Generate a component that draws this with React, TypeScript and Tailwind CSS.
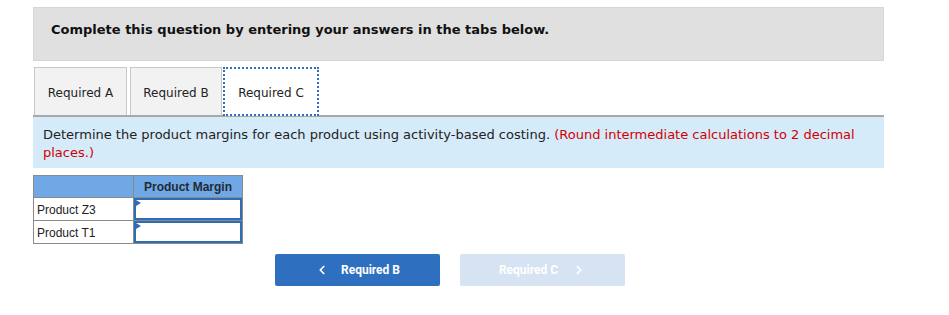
import React from 'react';
import { ChevronLeft, ChevronRight } from 'lucide-react';

const verdana = { fontFamily: '"DejaVu Sans", Verdana, sans-serif' };

function Tab({ label, className }: { label: string; className: string }) {
  return (
    <div className={`h-[48px] bg-[#f2f2f2] border border-[#c8c8c8] border-b-0 flex items-center justify-center pt-[2px] text-[12px] text-[#222] ${className}`}>
      {label}
    </div>
  );
}

function InputCell() {
  return (
    <td className="border border-[#8a8a8a] p-0 h-[23px]">
      <div className="relative h-[22px] border-2 border-[#2e6db4] bg-white">
        <span className="absolute left-0 top-0 w-0 h-0 border-t-[3px] border-b-[3px] border-l-[5px] border-t-transparent border-b-transparent border-l-[#2e6db4]" />
      </div>
    </td>
  );
}

export default function App() {
  return (
    <div className="w-[949px] h-[315px] bg-white overflow-hidden pt-[7px] pl-[33px]">
      <div className="w-[851px]">
        <div
          className="h-[54px] bg-[#e0e0e0] border border-[#d6d6d6] pl-[17px] pt-[12px] text-[13px] font-bold text-[#111]"
          style={verdana}
        >
          Complete this question by entering your answers in the tabs below.
        </div>

        <div className="mt-[6px] flex items-end border-b-2 border-[#a9a9a9]" style={verdana}>
          <Tab label="Required A" className="ml-[1px] w-[93px]" />
          <Tab label="Required B" className="ml-[3px] w-[92px]" />
          <div className="ml-[1px] w-[96px] h-[49px] -mb-px bg-white border-2 border-dotted border-[#2f6fbf] flex items-center justify-center pt-[2px] text-[12px] text-[#222]">
            Required C
          </div>
        </div>

        <div className="h-[51px] bg-[#d6ebf9] pl-[10px] pt-[9px] text-[13px] leading-[18px] text-[#222]" style={verdana}>
          Determine the product margins for each product using activity-based costing.{' '}
          <span className="text-[#d10000]">(Round intermediate calculations to 2 decimal places.)</span>
        </div>

        <table
          className="mt-[7px] border-collapse text-[12px] text-[#222]"
          style={{ fontFamily: '"Liberation Sans", Arial, sans-serif' }}
        >
          <thead>
            <tr className="bg-[#6fa8e4] h-[22px]">
              <th className="w-[100px] border border-[#8a8a8a]" />
              <th className="w-[109px] border border-[#8a8a8a] font-bold text-center text-[#1f2a37]">Product Margin</th>
            </tr>
          </thead>
          <tbody>
            <tr>
              <td className="border border-[#8a8a8a] pl-[3px] pt-[2px]">Product Z3</td>
              <InputCell />
            </tr>
            <tr>
              <td className="border border-[#8a8a8a] pl-[3px] pt-[2px]">Product T1</td>
              <InputCell />
            </tr>
          </tbody>
        </table>

        <div className="mt-[10px] ml-[242px] flex gap-[20px]" style={{ fontFamily: 'Roboto, "Open Sans", sans-serif' }}>
          <button className="w-[165px] h-[32px] rounded-[2px] bg-[#2f6fbf] text-white text-[12px] font-bold flex items-center justify-center gap-[12px]">
            <ChevronLeft className="w-[14px] h-[14px]" strokeWidth={3} />
            <span>Required B</span>
          </button>
          <button className="w-[165px] h-[32px] rounded-[2px] bg-[#d6e3f3] text-white text-[12px] font-bold flex items-center justify-center gap-[14px]">
            <span>Required C</span>
            <ChevronRight className="w-[14px] h-[14px]" strokeWidth={3} />
          </button>
        </div>
      </div>
    </div>
  );
}
